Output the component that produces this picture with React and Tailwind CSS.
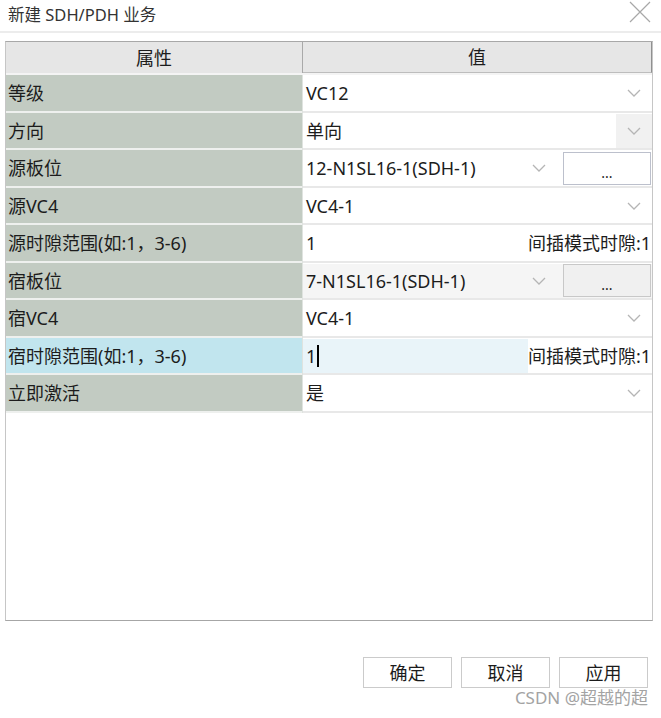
import React from "react";

const FONT = { fontFamily: '"Noto Sans", "Noto Sans CJK SC", sans-serif' };

function Chevron() {
  return (
    <svg width="14" height="8" viewBox="0 0 14 8" className="shrink-0">
      <polyline points="1,1 7,7 13,1" fill="none" stroke="#b5b5b5" strokeWidth="1.3" />
    </svg>
  );
}

function Row({ label, highlight, children }) {
  return (
    <div className="flex h-[37.5px]">
      <div
        className={
          "w-[296px] shrink-0 flex items-center pl-[2px] pt-[1px] border-b-2 border-[#eef0ee] " +
          (highlight ? "bg-[#c1e5ee]" : "bg-[#c2cbc2]")
        }
      >
        {label}
      </div>
      <div className="w-[1px] shrink-0 bg-[#dfe3df]" />
      <div className="flex-1 flex pt-[1px] border-b-2 border-[#e8e8e8] bg-white">{children}</div>
    </div>
  );
}

function Combo({ value, grayArrow }) {
  return (
    <div className="flex-1 flex items-center">
      <div className="flex-1 pl-[3px]">{value}</div>
      <div
        className={
          "w-[36px] self-stretch flex items-center justify-center " +
          (grayArrow ? "bg-[#f1f1f1]" : "")
        }
      >
        <Chevron />
      </div>
    </div>
  );
}

function BoardCombo({ value, gray }) {
  return (
    <div className={"flex-1 flex items-center " + (gray ? "bg-[#f5f5f5]" : "")}>
      <div className="flex-1 flex items-center pl-[3px]">
        <div className="flex-1">{value}</div>
        <div className="w-[28px] flex justify-center mr-[10px]">
          <Chevron />
        </div>
      </div>
      <div
        className={
          "w-[88px] h-[33px] mr-[1px] border flex items-end justify-center pb-[4px] text-[14px] leading-none " +
          (gray ? "bg-[#f0f0f0] border-[#c8c8c8]" : "bg-white border-[#bcc0cc]")
        }
      >
        ...
      </div>
    </div>
  );
}

function Slot({ value, highlight, caret }) {
  return (
    <div className="flex-1 flex items-center">
      <div
        className={
          "self-stretch flex items-center pl-[3px] w-[225px] " + (highlight ? "bg-[#e9f4f9]" : "")
        }
      >
        {value}
        {caret && <span className="inline-block w-[1.5px] h-[22px] bg-black ml-[1px]" />}
      </div>
      <div className="flex-1 text-right whitespace-nowrap pr-[1px]">间插模式时隙:1</div>
    </div>
  );
}

export default function App() {
  return (
    <div className="w-[661px] h-[718px] bg-white relative text-[#1c1c1c] overflow-hidden" style={FONT}>
      <div className="h-[33px] flex items-center justify-between pl-[8px] pr-[10px] border-b-2 border-[#ececec]">
        <div className="text-[16.5px] text-[#333] leading-none">新建 SDH/PDH 业务</div>
        <svg width="22" height="22" viewBox="0 0 22 22" className="mb-[8px]">
          <path d="M1 1 L21 21 M21 1 L1 21" stroke="#a8a8a8" strokeWidth="1.2" fill="none" />
        </svg>
      </div>

      <div className="ml-[5px] mt-[8px] w-[648px] h-[580px] border border-[#c6c6c6] border-t-[#a8a8a8] border-b-[#a6a6a6] text-[18px] leading-none">
        <div className="flex h-[33px] bg-[#e6e6e6] border-b-2 border-[#f4f4f4]">
          <div className="w-[296px] flex items-center justify-center">属性</div>
          <div className="w-[1px] bg-[#a9a9a9]" />
          <div className="flex-1 flex items-center justify-center border-r border-[#909090] border-b border-b-[#bdbdbd]">值</div>
        </div>

        <Row label="等级">
          <Combo value="VC12" />
        </Row>
        <Row label="方向">
          <Combo value="单向" grayArrow />
        </Row>
        <Row label="源板位">
          <BoardCombo value="12-N1SL16-1(SDH-1)" />
        </Row>
        <Row label="源VC4">
          <Combo value="VC4-1" />
        </Row>
        <Row label="源时隙范围(如:1，3-6)">
          <Slot value="1" />
        </Row>
        <Row label="宿板位">
          <BoardCombo value="7-N1SL16-1(SDH-1)" gray />
        </Row>
        <Row label="宿VC4">
          <Combo value="VC4-1" />
        </Row>
        <Row label="宿时隙范围(如:1，3-6)" highlight>
          <Slot value="1" highlight caret />
        </Row>
        <Row label="立即激活">
          <Combo value="是" />
        </Row>
      </div>

      <div className="flex justify-end gap-[9px] pr-[13px] mt-[36px] text-[18px]">
        {["确定", "取消", "应用"].map((t) => (
          <div
            key={t}
            className="w-[89px] h-[31px] border border-[#cbcbcb] bg-white flex items-center justify-center leading-none"
          >
            {t}
          </div>
        ))}
      </div>
      <div className="absolute right-[13px] top-[689px] text-[17px] text-[#a3a3a3] leading-none">
        CSDN @超越的超
      </div>
    </div>
  );
}
